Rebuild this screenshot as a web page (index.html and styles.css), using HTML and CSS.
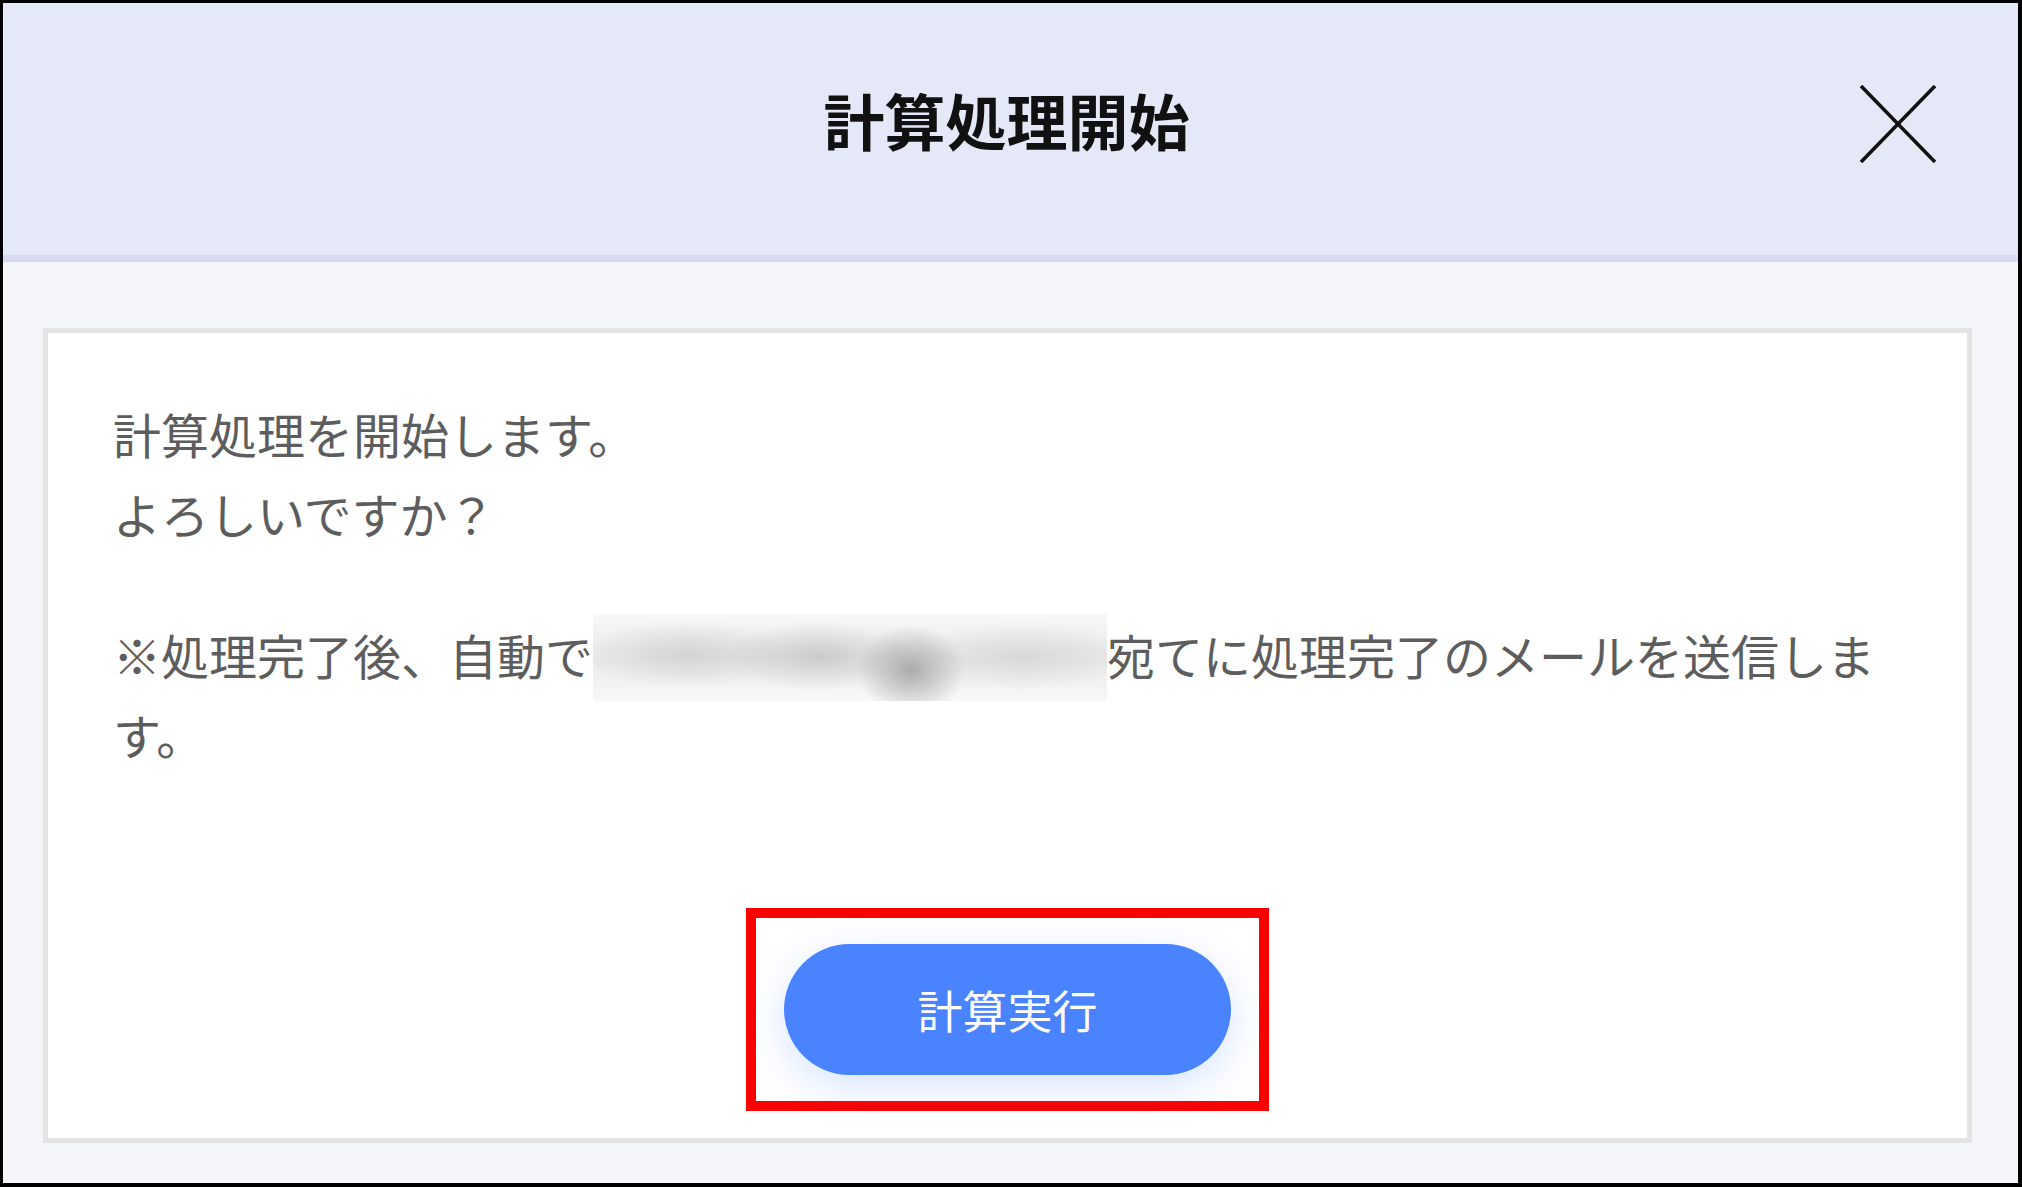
FILE: index.html
```html
<!DOCTYPE html>
<html lang="ja">
<head>
<meta charset="utf-8">
<title>計算処理開始</title>
<link rel="stylesheet" href="styles.css">
</head>
<body>
<div class="dialog">
  <header class="dialog-header">
    <div class="spacer"></div>
    <h1 class="dialog-title">計算処理開始</h1>
    <button class="close-btn" type="button" aria-label="閉じる">
      <svg width="76" height="78" viewBox="0 0 76 78" aria-hidden="true">
        <line x1="1" y1="1" x2="75" y2="77" stroke="#111" stroke-width="3.6"/>
        <line x1="75" y1="1" x2="1" y2="77" stroke="#111" stroke-width="3.6"/>
      </svg>
    </button>
  </header>
  <main class="dialog-body">
    <section class="card">
      <div class="message">
        <p>計算処理を開始します。<br>よろしいですか？</p>
        <p>※処理完了後、自動で<span class="redacted" aria-hidden="true"></span>宛てに処理完了のメールを送信します。</p>
      </div>
      <div class="actions">
        <div class="highlight">
          <button class="primary-btn" type="button">計算実行</button>
        </div>
      </div>
    </section>
  </main>
</div>
</body>
</html>
```
FILE: styles.css
```css
html, body {
  margin: 0;
  padding: 0;
  background: #ffffff;
}

body {
  font-family: "Noto Sans CJK JP", "Noto Sans", sans-serif;
}

.dialog {
  box-sizing: border-box;
  width: 2022px;
  height: 1187px;
  border-style: solid;
  border-color: #000;
  border-width: 3px 4px 4px 3px;
  display: flex;
  flex-direction: column;
  overflow: hidden;
}

.dialog-header {
  flex: 0 0 auto;
  height: 252px;
  background: #e5e8f6;
  border-bottom: 7px solid #d7daf0;
  display: grid;
  grid-template-columns: 1fr auto 1fr;
  align-items: center;
}

.dialog-title {
  margin: 0 0 18px 0;
  font-size: 61px;
  font-weight: 700;
  color: #111;
  line-height: 1.2;
  letter-spacing: 0;
  transform: translateX(-4px);
}

.close-btn {
  justify-self: end;
  margin: 0 82px 11px 0;
  padding: 0;
  border: 0;
  background: transparent;
  width: 76px;
  height: 78px;
  display: flex;
}

.dialog-body {
  flex: 1 1 auto;
  background: #f4f6fa;
  padding: 66px 46px 40px 40px;
  display: flex;
}

.card {
  flex: 1 1 auto;
  box-sizing: border-box;
  background: #fff;
  border: 5px solid #e4e4e5;
  padding: 60px 65px 27px 65px;
  display: flex;
  flex-direction: column;
}

.message {
  color: #5d5d5d;
  font-size: 48px;
  line-height: 80px;
}

.message p {
  margin: 0;
}

.message p + p {
  margin-top: 61px;
}

.redacted {
  display: inline-block;
  width: 514px;
  height: 87px;
  margin-bottom: -7px;
  vertical-align: top;
  background:
    radial-gradient(ellipse 55px 45px at 318px 56px, rgba(155,155,155,0.8), rgba(155,155,155,0) 100%),
    radial-gradient(ellipse 95px 34px at 225px 42px, rgba(190,190,190,0.7), rgba(190,190,190,0) 100%),
    radial-gradient(ellipse 105px 34px at 95px 40px, rgba(200,200,200,0.65), rgba(200,200,200,0) 100%),
    radial-gradient(ellipse 110px 34px at 430px 42px, rgba(205,205,205,0.6), rgba(205,205,205,0) 100%),
    linear-gradient(180deg, #f8f8f8 0%, #e9e9e9 50%, #f8f8f8 100%);
}

.actions {
  margin-top: auto;
  display: flex;
  justify-content: center;
}

.highlight {
  border: 10px solid #ff0000;
  padding: 26px 28px;
  display: flex;
}

.primary-btn {
  width: 447px;
  height: 131px;
  border: 0;
  border-radius: 66px;
  background: #4a83ff;
  color: #fff;
  font-family: "Noto Sans CJK JP", "Noto Sans", sans-serif;
  font-size: 45px;
  font-weight: 400;
  line-height: 1;
  padding: 0;
  box-shadow: 0 12px 40px rgba(74, 131, 255, 0.22);
}
```
